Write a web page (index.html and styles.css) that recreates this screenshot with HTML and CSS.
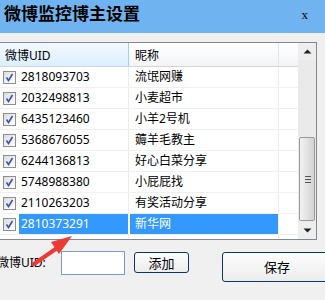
FILE: index.html
```html
<!DOCTYPE html>
<html>
<head>
<meta charset="utf-8">
<link rel="stylesheet" href="styles.css">
</head>
<body>
<div class="window">
  <div class="titlebar">
    <span class="title">微博监控博主设置</span>
    <span class="close">x</span>
  </div>
  <div class="main">
    <div class="list">
      <div class="table">
        <div class="row head">
          <div class="c1"><span class="htext">微博UID</span></div>
          <div class="c2">昵称</div>
          <div class="c3"></div>
        </div>
        <div class="row">
          <div class="c1"><span class="cb"><svg viewBox="0 0 13 13" width="13" height="13"><path d="M3.5 6.5 L5.5 9.5 L9.5 3" fill="none" stroke="#3b55a8" stroke-width="1.6"/></svg></span><span class="uid">2818093703</span></div>
          <div class="c2"><span class="name">流氓网赚</span></div>
          <div class="c3"></div>
        </div>
        <div class="row">
          <div class="c1"><span class="cb"><svg viewBox="0 0 13 13" width="13" height="13"><path d="M3.5 6.5 L5.5 9.5 L9.5 3" fill="none" stroke="#3b55a8" stroke-width="1.6"/></svg></span><span class="uid">2032498813</span></div>
          <div class="c2"><span class="name">小麦超市</span></div>
          <div class="c3"></div>
        </div>
        <div class="row">
          <div class="c1"><span class="cb"><svg viewBox="0 0 13 13" width="13" height="13"><path d="M3.5 6.5 L5.5 9.5 L9.5 3" fill="none" stroke="#3b55a8" stroke-width="1.6"/></svg></span><span class="uid">6435123460</span></div>
          <div class="c2"><span class="name">小羊2号机</span></div>
          <div class="c3"></div>
        </div>
        <div class="row">
          <div class="c1"><span class="cb"><svg viewBox="0 0 13 13" width="13" height="13"><path d="M3.5 6.5 L5.5 9.5 L9.5 3" fill="none" stroke="#3b55a8" stroke-width="1.6"/></svg></span><span class="uid">5368676055</span></div>
          <div class="c2"><span class="name">薅羊毛教主</span></div>
          <div class="c3"></div>
        </div>
        <div class="row">
          <div class="c1"><span class="cb"><svg viewBox="0 0 13 13" width="13" height="13"><path d="M3.5 6.5 L5.5 9.5 L9.5 3" fill="none" stroke="#3b55a8" stroke-width="1.6"/></svg></span><span class="uid">6244136813</span></div>
          <div class="c2"><span class="name">好心白菜分享</span></div>
          <div class="c3"></div>
        </div>
        <div class="row">
          <div class="c1"><span class="cb"><svg viewBox="0 0 13 13" width="13" height="13"><path d="M3.5 6.5 L5.5 9.5 L9.5 3" fill="none" stroke="#3b55a8" stroke-width="1.6"/></svg></span><span class="uid">5748988380</span></div>
          <div class="c2"><span class="name">小屁屁找</span></div>
          <div class="c3"></div>
        </div>
        <div class="row">
          <div class="c1"><span class="cb"><svg viewBox="0 0 13 13" width="13" height="13"><path d="M3.5 6.5 L5.5 9.5 L9.5 3" fill="none" stroke="#3b55a8" stroke-width="1.6"/></svg></span><span class="uid">2110263203</span></div>
          <div class="c2"><span class="name">有奖活动分享</span></div>
          <div class="c3"></div>
        </div>
        <div class="row selected">
          <div class="c1"><span class="cb"><svg viewBox="0 0 13 13" width="13" height="13"><path d="M3.5 6.5 L5.5 9.5 L9.5 3" fill="none" stroke="#3b55a8" stroke-width="1.6"/></svg></span><span class="uid">2810373291</span></div>
          <div class="c2"><span class="name">新华网</span></div>
          <div class="c3"></div>
        </div>
        <div class="row tail">
          <div class="c1"></div>
          <div class="c2"></div>
          <div class="c3"></div>
        </div>
      </div>
      <div class="scrollbar">
        <div class="sb-btn"><svg width="9" height="5" viewBox="0 0 9 5"><path d="M0.5 4.5 L4.5 0.5 L8.5 4.5 Z" fill="#222"/></svg></div>
        <div class="sb-track">
          <div class="thumb">
            <span class="grip"></span><span class="grip"></span><span class="grip"></span>
          </div>
        </div>
        <div class="sb-btn"><svg width="9" height="5" viewBox="0 0 9 5"><path d="M0.5 0.5 L8.5 0.5 L4.5 4.5 Z" fill="#222"/></svg></div>
      </div>
    </div>
    <div class="controls">
      <span class="label">微博UID:</span>
      <span class="input"></span>
      <button class="btn add">添加</button>
      <button class="btn save">保存</button>
    </div>
  </div>
  <svg class="arrow" width="60" height="45" viewBox="0 0 60 45">
    <path d="M8 33 L34 15" stroke="#ee3a35" stroke-width="4" stroke-linecap="round"/>
    <polygon points="46,5 25,11 33,23" fill="#ee3a35"/>
  </svg>
</div>
</body>
</html>
```

FILE: styles.css
```css
html, body {
  margin: 0;
  padding: 0;
}
body {
  background: #f0f0f0;
  font-family: "Noto Sans", "Noto Sans CJK SC", sans-serif;
  font-size: 12px;
  color: #000;
  overflow: hidden;
}
.window {
  position: relative;
  width: 325px;
  height: 300px;
  overflow: hidden;
}
.titlebar {
  height: 33px;
  background: #6fb4f0;
  display: flex;
  justify-content: space-between;
  align-items: flex-start;
  padding: 2px 0 0 4px;
  box-sizing: border-box;
}
.title {
  font-family: "Noto Sans CJK SC", sans-serif;
  font-weight: bold;
  font-size: 17px;
  line-height: 22px;
  letter-spacing: 0;
}
.close {
  font-family: "Liberation Serif", serif;
  font-size: 13px;
  line-height: 26px;
  margin-right: 17px;
}
.main {
  padding-top: 9px;
}
.list {
  margin-left: -1px;
  width: 318px;
  height: 198px;
  box-sizing: border-box;
  border: 1px solid #828790;
  background: #fff;
  display: flex;
}
.table {
  width: 298px;
  display: flex;
  flex-direction: column;
}
.row {
  display: grid;
  grid-template-columns: 129px 150px 19px;
  height: 21px;
  border-bottom: 1px solid #f0f0f0;
  box-sizing: border-box;
  flex: none;
}
.row > div {
  border-right: 1px solid #ececec;
  display: flex;
  align-items: center;
  box-sizing: border-box;
}
.row > .c3 {
  border-right: none;
}
.head {
  height: 24px;
  background: linear-gradient(#ffffff, #f3f4f6);
  border-bottom: 1px solid #d5d5d5;
}
.head > div {
  border-right: 1px solid #e3e5e8;
}
.head .c1 {
  background: linear-gradient(#f3f9fe, #dcefff);
  border-right: 1px solid #9fd0f2;
}
.head .htext {
  padding-left: 5px;
}
.head .c2 {
  padding-left: 6px;
}
.cb {
  width: 13px;
  height: 13px;
  margin-left: 3px;
  box-sizing: border-box;
  border: 1px solid #8f8f8f;
  background: linear-gradient(135deg, #dcdcdc, #ffffff);
  display: flex;
  flex: none;
}
.cb svg {
  margin: -1px;
}
.uid {
  margin-left: 3px;
  padding-left: 2px;
  height: 20px;
  line-height: 20px;
  flex: 1;
}
.name {
  margin-left: 1px;
  padding-left: 5px;
  height: 20px;
  line-height: 20px;
  flex: 1;
}
.selected .uid,
.selected .name {
  background: #3399ff;
  color: #fff;
}
.selected > .c1 {
  border-right-color: #fff;
}
.tail {
  height: 3px;
  border-bottom: none;
}
.scrollbar {
  width: 18px;
  background: #eaeaea;
  display: flex;
  flex-direction: column;
}
.sb-btn {
  height: 17px;
  display: flex;
  align-items: center;
  justify-content: center;
  background: #eeeeee;
}
.sb-btn svg {
  margin-left: 1px;
}
.sb-track {
  flex: 1;
  padding: 77px 1px 0 1px;
  box-sizing: border-box;
}
.thumb {
  height: 84px;
  box-sizing: border-box;
  border: 1px solid #9a9a9a;
  border-radius: 2px;
  background: linear-gradient(90deg, #f2f2f2, #e6e6e6 40%, #d2d2d2);
  display: flex;
  flex-direction: column;
  align-items: center;
  justify-content: center;
  gap: 2px;
}
.grip {
  width: 6px;
  height: 1px;
  background: #555;
  margin-left: 1px;
}
.controls {
  display: flex;
  align-items: flex-start;
  margin-top: 11px;
}
.controls > * {
  flex: none;
}
.label {
  margin-left: -3px;
  width: 64px;
  line-height: 24px;
  font-size: 12px;
  white-space: nowrap;
}
.input {
  width: 64px;
  height: 24px;
  box-sizing: border-box;
  border: 1px solid #7f9db9;
  background: #fff;
}
.btn {
  font-family: "Noto Sans CJK SC", sans-serif;
  font-size: 13px;
  color: #000;
  border: 1px solid #0f3468;
  border-radius: 3px;
  background: linear-gradient(#fdfdfd, #ececec);
  padding: 0;
  margin-top: 1px;
  box-sizing: border-box;
}
.add {
  margin-left: 9px;
  width: 55px;
  height: 21px;
  line-height: 19px;
}
.save {
  margin-left: 33px;
  width: 110px;
  height: 30px;
  line-height: 28px;
}
.arrow {
  position: absolute;
  left: 26px;
  top: 231px;
}
```
